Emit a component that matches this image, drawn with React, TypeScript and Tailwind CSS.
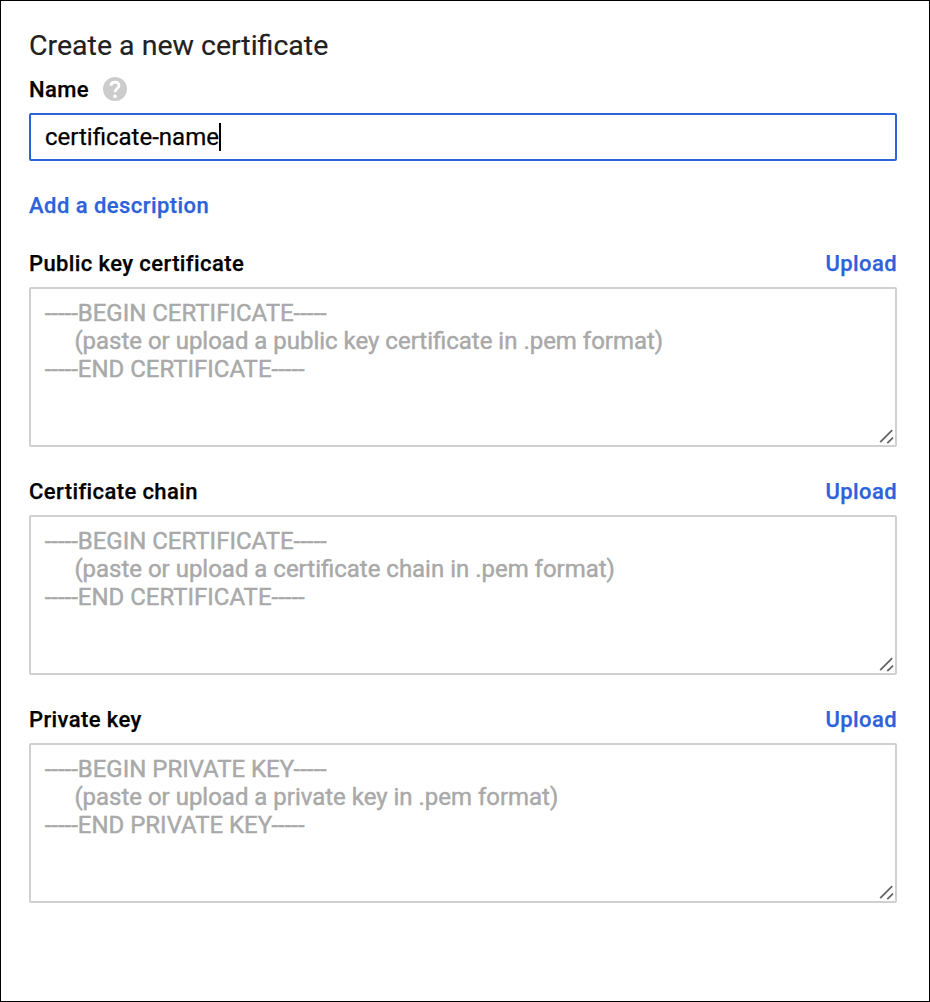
import React from "react";

const fields = [
  { label: "Public key certificate", kind: "CERTIFICATE", hint: "(paste or upload a public key certificate in .pem format)" },
  { label: "Certificate chain", kind: "CERTIFICATE", hint: "(paste or upload a certificate chain in .pem format)" },
  { label: "Private key", kind: "PRIVATE KEY", hint: "(paste or upload a private key in .pem format)" },
];

function KeyField({ label, kind, hint }: { label: string; kind: string; hint: string }) {
  return (
    <section className="mb-7 h-[200px]">
      <div className="flex h-10 items-start justify-between pt-px text-[22px] leading-8 font-medium tracking-[0.4px] [-webkit-text-stroke:0.25px]">
        <h2>{label}</h2>
        <button className="text-[#2d62da]">Upload</button>
      </div>
      <div className="relative h-40 rounded-[2px] border-2 border-[#d0d0d0] pr-3.5 pl-[13.7px] pt-[10px] text-[23.98px] leading-7 text-[#a9a9a9] [-webkit-text-stroke:0.45px]">
        <p>-----BEGIN {kind}-----</p>
        <p className="pl-[29.7px]">{hint}</p>
        <p>-----END {kind}-----</p>
        <svg className="absolute right-0 bottom-0 size-[18px]" viewBox="0 0 18 18" fill="none" stroke="#666" strokeWidth="1.9">
          <path d="M3.2 15.2L15.2 3.2M10.3 16.1L16 10.6" />
        </svg>
      </div>
    </section>
  );
}

export default function App() {
  return (
    <main className="h-[1002px] w-[930px] border border-black bg-white px-7 pt-7 font-['Roboto',sans-serif] text-black">
      <h1 className="h-11 pt-px text-[28.5px] leading-8 text-[#212121] [-webkit-text-stroke:0.2px]">Create a new certificate</h1>
      <div className="flex h-10 items-start pt-px text-[22px] leading-8 font-medium tracking-[0.4px]">
        <span className="w-[74px] [-webkit-text-stroke:0.25px]">Name</span>
        <svg className="mt-[3px] size-6" viewBox="0 0 24 24" fill="none">
          <circle cx="12" cy="12" r="12" fill="#ccc" />
          <path d="M8 8.8C8 6.5 9.6 5.2 12 5.2S16 6.7 16 8.7C16 11.5 12 11.6 12 15.3" stroke="#fff" strokeWidth="2.8" />
          <circle cx="12" cy="19.3" r="1.9" fill="#fff" />
        </svg>
      </div>
      <div className="flex h-12 w-[868px] items-center rounded-[2px] border-2 border-[#2d62da] px-3.5 text-[24px] [-webkit-text-stroke:0.25px]">
        <span>certificate-name</span><span className="h-7 w-0.5 bg-black" />
      </div>
      <div className="mt-[29px] mb-[25px] text-[22px] leading-8 font-medium tracking-[0.45px] text-[#2d62da] [-webkit-text-stroke:0.25px]">Add a description</div>
      <div className="w-[868px]">{fields.map((f) => <KeyField key={f.label} {...f} />)}</div>
    </main>
  );
}
